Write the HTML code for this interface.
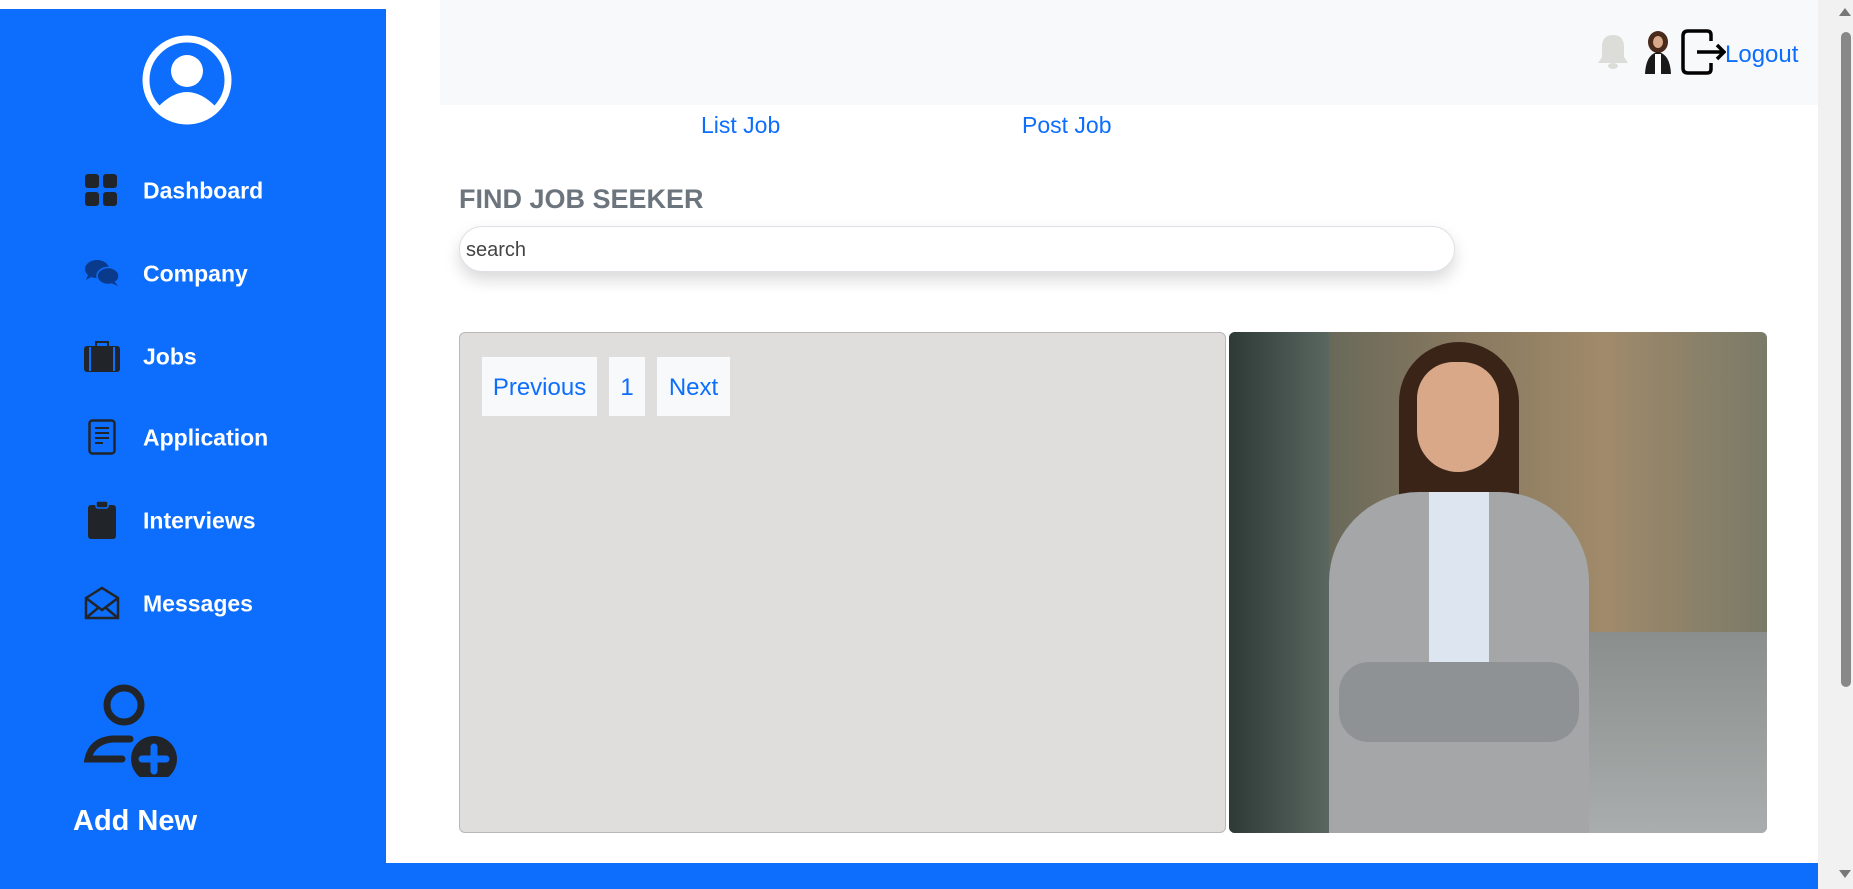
<!DOCTYPE html>
<html><head><style>
*{margin:0;padding:0;box-sizing:border-box}
body{width:1853px;height:889px;overflow:hidden;background:#fff;font-family:"Liberation Sans",sans-serif;position:relative}
.a{position:absolute}
#side{left:0;top:9px;width:386px;height:854px;background:#0d6efd}
.mi{position:absolute;left:143px;color:#fff;font-weight:bold;font-size:23px;transform:translateY(-50%)}
.ic{position:absolute;left:84px;transform:translateY(-50%)}
.pg{position:absolute;top:357px;height:59px;background:#f8f9fa;color:#0d6efd;font-size:24px;line-height:61px;text-align:center}
</style></head><body>
<div id="side" class="a">
<svg class="a" style="left:141px;top:25px" width="92" height="92" viewBox="0 0 92 92"><circle cx="46" cy="46" r="41" fill="none" stroke="#fff" stroke-width="7"/><circle cx="46" cy="37" r="16" fill="#fff"/><path d="M17 73 Q46 43 75 73 Q46 95 17 73Z" fill="#fff"/></svg>
<svg class="ic" style="top:181px" width="34" height="34" viewBox="0 0 34 34" fill="#212529"><rect x="1" y="1" width="14" height="14" rx="3"/><rect x="19" y="1" width="14" height="14" rx="3"/><rect x="1" y="19" width="14" height="14" rx="3"/><rect x="19" y="19" width="14" height="14" rx="3"/></svg>
<div class="mi" style="top:182px">Dashboard</div>
<svg class="ic" style="top:264px" width="36" height="30" viewBox="0 0 36 30" fill="#0a3a8c"><ellipse cx="13" cy="11" rx="12" ry="9"/><path d="M4 17 L2 22 L9 18Z"/><ellipse cx="24" cy="18" rx="11" ry="8.5" stroke="#0d6efd" stroke-width="1.5"/><path d="M31 24 L34 28 L27 25Z"/></svg>
<div class="mi" style="top:265px">Company</div>
<svg class="ic" style="top:347px" width="36" height="32" viewBox="0 0 36 32" fill="#212529"><path d="M12 6 V2 H24 V6" fill="none" stroke="#212529" stroke-width="2"/><rect x="0" y="6" width="36" height="26" rx="3"/><rect x="5" y="7" width="2" height="24" fill="#0d6efd"/><rect x="29" y="7" width="2" height="24" fill="#0d6efd"/></svg>
<div class="mi" style="top:348px">Jobs</div>
<svg class="ic" style="top:428px;left:88px" width="28" height="36" viewBox="0 0 28 36"><rect x="1.5" y="1.5" width="25" height="33" rx="3" fill="none" stroke="#212529" stroke-width="2.5"/><path d="M7 9H21M7 14H21M7 19H21M7 24H15" stroke="#212529" stroke-width="2"/></svg>
<div class="mi" style="top:429px">Application</div>
<svg class="ic" style="top:511px;left:88px" width="28" height="38" viewBox="0 0 28 38" fill="#212529"><rect x="0" y="4" width="28" height="34" rx="3"/><rect x="8" y="0" width="12" height="7" rx="2" stroke="#0d6efd" stroke-width="1.5"/></svg>
<div class="mi" style="top:512px">Interviews</div>
<svg class="ic" style="top:594px" width="36" height="34" viewBox="0 0 36 34" fill="none" stroke="#212529" stroke-width="2.5"><path d="M2 12 L18 2 L34 12 V32 H2Z"/><path d="M2 12 L18 24 L34 12 M2 32 L14 22 M34 32 L22 22"/></svg>
<div class="mi" style="top:595px">Messages</div>
<svg class="a" style="left:84px;top:672px" width="96" height="96" viewBox="0 0 96 96"><circle cx="40" cy="24" r="17" fill="none" stroke="#212529" stroke-width="7"/><path d="M46 58 H28 Q8 60 4 78 H38" fill="none" stroke="#212529" stroke-width="7" stroke-linecap="round"/><circle cx="70" cy="78" r="23" fill="#212529"/><path d="M70 66V90M58 78H82" stroke="#0d6efd" stroke-width="7" stroke-linecap="round"/></svg>
<div class="a" style="left:73px;top:796px;color:#fff;font-weight:bold;font-size:29px">Add New</div>
</div>
<div class="a" style="left:0;top:863px;width:1818px;height:26px;background:#0d6efd"></div>
<div class="a" style="left:1818px;top:0;width:35px;height:889px;background:#f1f1f1"></div>
<div class="a" style="left:1839px;top:8px;width:0;height:0;border-left:6px solid transparent;border-right:6px solid transparent;border-bottom:8px solid #777"></div>
<div class="a" style="left:1839px;top:870px;width:0;height:0;border-left:6px solid transparent;border-right:6px solid transparent;border-top:8px solid #777"></div>
<div class="a" style="left:1841px;top:32px;width:10px;height:655px;background:#888;border-radius:5px"></div>
<div class="a" style="left:440px;top:0;width:1378px;height:105px;background:#f8f9fa"></div>
<svg class="a" style="left:1596px;top:33px" width="34" height="38" viewBox="0 0 34 38" fill="#dcdcd8"><path d="M17 2 Q6 2 6 14 V24 L2 30 H32 L28 24 V14 Q28 2 17 2Z"/><ellipse cx="17" cy="33" rx="5" ry="3"/></svg>
<svg class="a" style="left:1642px;top:30px" width="32" height="44" viewBox="0 0 32 44"><ellipse cx="16" cy="12" rx="10" ry="11" fill="#4a2a1a"/><ellipse cx="16" cy="12" rx="5" ry="6" fill="#d9a98a"/><path d="M3 44 Q4 24 16 22 Q28 24 29 44Z" fill="#1a1a1a"/><path d="M13 24 H19 V44 H13Z" fill="#fff"/></svg>
<svg class="a" style="left:1680px;top:29px" width="46" height="46" viewBox="0 0 46 46" fill="none" stroke="#000" stroke-width="3.5"><path d="M31 12 V6 Q31 2 27 2 H8 Q3 2 3 7 V39 Q3 44 8 44 H27 Q31 44 31 40 V34"/><path d="M17 23 H44 M37 16 L44 23 L37 30"/></svg>
<div class="a" style="left:1725px;top:41px;color:#0d6efd;font-size:24px">Logout</div>
<div class="a" style="left:701px;top:112px;color:#0d6efd;font-size:23px">List Job</div>
<div class="a" style="left:1022px;top:112px;color:#0d6efd;font-size:23px">Post Job</div>
<div class="a" style="left:459px;top:184px;color:#6c757d;font-size:27px;font-weight:bold">FIND JOB SEEKER</div>
<div class="a" style="left:459px;top:226px;width:996px;height:46px;border:1px solid #dee2e6;border-radius:23px;background:#fff;box-shadow:0 8px 16px rgba(0,0,0,.15);font-size:20px;color:#444;padding-left:6px;line-height:46px">search</div>
<div class="a" style="left:459px;top:332px;width:767px;height:501px;background:#dfdedd;border:1px solid #b8b8b8;border-radius:6px"></div>
<div class="pg" style="left:482px;width:115px">Previous</div>
<div class="pg" style="left:609px;width:36px">1</div>
<div class="pg" style="left:657px;width:73px">Next</div>
<div class="a" style="left:1229px;top:332px;width:538px;height:501px;border-radius:6px;overflow:hidden;background:linear-gradient(90deg,#3d4a45 0%,#6b6a5a 20%,#8a7a60 45%,#a08a6a 70%,#7a7a68 100%)">
<div class="a" style="left:0;top:300px;width:538px;height:201px;background:linear-gradient(180deg,#8a8e8c,#a9adad)"></div>
<div class="a" style="left:0;top:0;width:100px;height:501px;background:linear-gradient(90deg,#2e3a36,#5a6660)"></div>
<div class="a" style="left:170px;top:10px;width:120px;height:200px;background:#3a2418;border-radius:60px 60px 10px 10px"></div>
<div class="a" style="left:188px;top:30px;width:82px;height:110px;background:#d8a888;border-radius:40px 40px 45px 45px"></div>
<div class="a" style="left:100px;top:160px;width:260px;height:341px;background:#a4a6a8;border-radius:90px 90px 0 0"></div>
<div class="a" style="left:200px;top:160px;width:60px;height:200px;background:#dde6f0"></div>
<div class="a" style="left:110px;top:330px;width:240px;height:80px;background:#8f9294;border-radius:30px"></div>
</div>
</body></html>
